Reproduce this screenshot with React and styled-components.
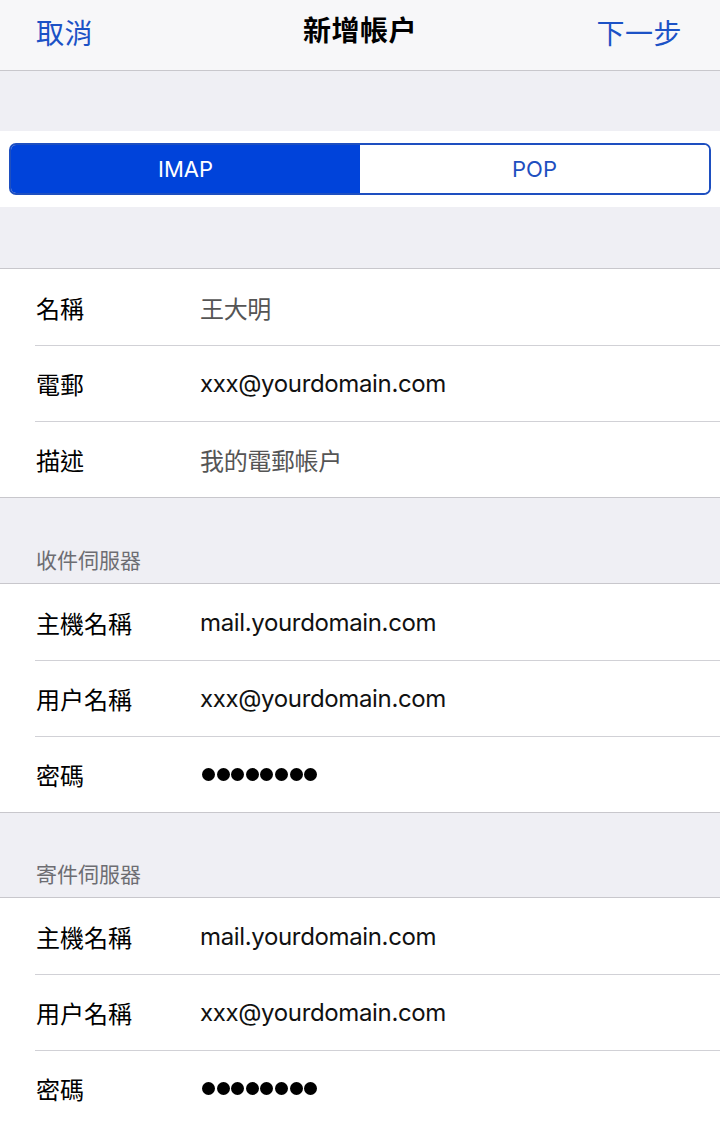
import React from 'react';
import styled, { createGlobalStyle } from 'styled-components';

const GlobalStyle = createGlobalStyle`
  html, body {
    margin: 0;
    padding: 0;
    background: #efeff4;
  }
  body {
    font-family: Inter, 'Noto Sans CJK TC', sans-serif;
    -webkit-font-smoothing: antialiased;
  }
`;

const Page = styled.div`
  width: 720px;
  min-height: 1124px;
  background: #efeff4;
  overflow: hidden;
`;

const NavBar = styled.header`
  height: 71px;
  background: #f7f7f9;
  border-bottom: 1px solid #c8c7cc;
  display: flex;
  align-items: center;
  justify-content: space-between;
  padding: 0 38px 6px 36px;
  box-sizing: border-box;
  position: relative;
`;

const NavButton = styled.span`
  font-size: 28px;
  color: #1c52c6;
  letter-spacing: 0.5px;
`;

const NavTitle = styled.h1`
  position: absolute;
  left: 0;
  right: 0;
  text-align: center;
  margin: 0 0 6px;
  font-size: 28px;
  font-weight: 700;
  color: #000;
  pointer-events: none;
  letter-spacing: 0.5px;
`;

const Spacer = styled.div`
  height: ${p => p.h}px;
`;

const SegmentBand = styled.div`
  background: #fff;
  height: 76px;
  display: flex;
  align-items: center;
  padding: 0 9px;
`;

const Segmented = styled.div`
  flex: 1;
  display: flex;
  height: 52px;
  border: 2px solid #1e4fc0;
  border-radius: 7px;
  overflow: hidden;
  box-sizing: border-box;
`;

const Segment = styled.div`
  flex: 1;
  display: flex;
  align-items: center;
  justify-content: center;
  font-size: 22px;
  background: ${p => (p.active ? '#0043da' : '#fff')};
  color: ${p => (p.active ? '#fff' : '#1e4fc0')};
`;

const SectionHeader = styled.div`
  height: ${p => p.h || 85}px;
  box-sizing: border-box;
  display: flex;
  align-items: flex-end;
  padding: 0 36px 9px;
  font-size: 21px;
  color: #6d6d72;
`;

const Group = styled.section`
  background: #fff;
  border-top: 1px solid #c8c7cc;
  border-bottom: 1px solid #c8c7cc;
  padding-top: 1px;
`;

const Row = styled.div`
  height: 75px;
  display: flex;
  align-items: center;
  margin-left: 35px;
  border-top: ${p => (p.first ? 'none' : '1px solid #d1d1d6')};
`;

const Label = styled.span`
  width: 164px;
  padding-left: 1px;
  font-size: 24px;
  color: #000;
`;

const Value = styled.span`
  font-size: 24px;
  letter-spacing: -0.35px;
  color: ${p => (p.muted ? '#555' : '#111')};
`;

const Dots = styled.span`
  display: flex;
  gap: 1.6px;
  padding-left: 2px;
`;

const Dot = styled.span`
  width: 13px;
  height: 13px;
  border-radius: 50%;
  background: #000;
`;

function Password() {
  return (
    <Dots aria-label="password">
      {Array.from({ length: 8 }).map((_, i) => (
        <Dot key={i} />
      ))}
    </Dots>
  );
}

const account = [
  { label: '名稱', value: '王大明', muted: true },
  { label: '電郵', value: 'xxx@yourdomain.com' },
  { label: '描述', value: '我的電郵帳户', muted: true },
];

const server = [
  { label: '主機名稱', value: 'mail.yourdomain.com' },
  { label: '用户名稱', value: 'xxx@yourdomain.com' },
  { label: '密碼', password: true },
];

function FieldGroup({ rows }) {
  return (
    <Group>
      {rows.map((r, i) => (
        <Row key={r.label} first={i === 0}>
          <Label>{r.label}</Label>
          {r.password ? <Password /> : <Value muted={r.muted}>{r.value}</Value>}
        </Row>
      ))}
    </Group>
  );
}

export default function App() {
  return (
    <Page>
      <GlobalStyle />
      <NavBar>
        <NavButton>取消</NavButton>
        <NavTitle>新增帳户</NavTitle>
        <NavButton>下一步</NavButton>
      </NavBar>
      <Spacer h={60} />
      <SegmentBand>
        <Segmented>
          <Segment active>IMAP</Segment>
          <Segment>POP</Segment>
        </Segmented>
      </SegmentBand>
      <Spacer h={61} />
      <FieldGroup rows={account} />
      <SectionHeader>收件伺服器</SectionHeader>
      <FieldGroup rows={server} />
      <SectionHeader h={84}>寄件伺服器</SectionHeader>
      <FieldGroup rows={server} />
    </Page>
  );
}
